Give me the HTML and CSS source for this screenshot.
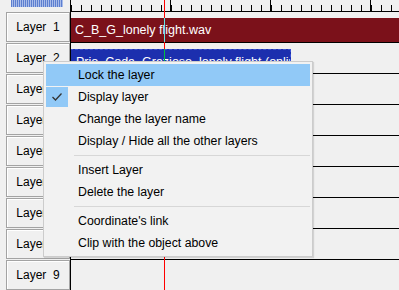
FILE: index.html
```html
<!DOCTYPE html>
<html>
<head>
  <title>Timeline</title>
  <link rel="stylesheet" href="styles.css">
</head>
<body>
  <div id="timeline">
    <div class="ruler-row">
      <div class="corner"><div class="zoom-bar"></div></div>
      <div class="ruler"></div>
    </div>

    <div class="layer-row">
      <div class="layer-head"><button class="layer-btn">Layer  1</button></div>
      <div class="track">
        <div class="clip clip-audio">C_B_G_lonely flight.wav</div>
      </div>
    </div>
    <div class="layer-row">
      <div class="layer-head"><button class="layer-btn">Layer  2</button></div>
      <div class="track">
        <div class="clip clip-selected">Prio_Coda_Grazioso_lonely flight (online).wav</div>
      </div>
    </div>
    <div class="layer-row">
      <div class="layer-head"><button class="layer-btn">Layer  3</button></div>
      <div class="track"></div>
    </div>
    <div class="layer-row">
      <div class="layer-head"><button class="layer-btn">Layer  4</button></div>
      <div class="track"></div>
    </div>
    <div class="layer-row">
      <div class="layer-head"><button class="layer-btn">Layer  5</button></div>
      <div class="track"></div>
    </div>
    <div class="layer-row">
      <div class="layer-head"><button class="layer-btn">Layer  6</button></div>
      <div class="track"></div>
    </div>
    <div class="layer-row">
      <div class="layer-head"><button class="layer-btn">Layer  7</button></div>
      <div class="track"></div>
    </div>
    <div class="layer-row">
      <div class="layer-head"><button class="layer-btn">Layer  8</button></div>
      <div class="track"></div>
    </div>
    <div class="layer-row">
      <div class="layer-head"><button class="layer-btn">Layer  9</button></div>
      <div class="track"></div>
    </div>
  </div>

  <div id="playhead"></div>

  <div id="context-menu">
    <div class="menu-item hover"><span class="menu-icon"></span><span>Lock the layer</span></div>
    <div class="menu-item"><span class="menu-icon checked">
      <svg width="12" height="10" viewBox="0 0 12 10"><polyline points="1.5,5 4.5,8 10.5,1.5" fill="none" stroke="#333" stroke-width="1.3"/></svg>
    </span><span>Display layer</span></div>
    <div class="menu-item"><span class="menu-icon"></span><span>Change the layer name</span></div>
    <div class="menu-item"><span class="menu-icon"></span><span>Display / Hide all the other layers</span></div>
    <div class="menu-sep"></div>
    <div class="menu-item"><span class="menu-icon"></span><span>Insert Layer</span></div>
    <div class="menu-item"><span class="menu-icon"></span><span>Delete the layer</span></div>
    <div class="menu-sep"></div>
    <div class="menu-item"><span class="menu-icon"></span><span>Coordinate's link</span></div>
    <div class="menu-item"><span class="menu-icon"></span><span>Clip with the object above</span></div>
  </div>
</body>
</html>
```

FILE: styles.css
```css
body {
  margin: 0;
  padding: 0;
  width: 399px;
  height: 290px;
  overflow: hidden;
  position: relative;
  background-color: #f0f0f0;
  font-family: "Liberation Sans", Arial, sans-serif;
  font-size: 12px;
  color: #000;
}

#timeline {
  display: flex;
  flex-direction: column;
}

.ruler-row {
  display: flex;
  height: 12px;
}

.corner {
  width: 70px;
  flex-shrink: 0;
}

.zoom-bar {
  margin-left: 11px;
  width: 52px;
  height: 7px;
  background: repeating-linear-gradient(to right, #5d7fd0 0 1px, #a9bce9 1px 2px);
}

.ruler {
  flex-grow: 1;
  border-left: 1px solid #000;
  border-bottom: 1px solid #000;
  background:
    repeating-linear-gradient(to right, transparent 0 99px, #000 99px 100px),
    repeating-linear-gradient(to right, #000 0 1px, transparent 1px 10px) left bottom / 100% 6px no-repeat;
}

.layer-row {
  display: flex;
  height: 31px;
}

.layer-head {
  width: 70px;
  flex-shrink: 0;
}

.layer-btn {
  display: block;
  margin: 0 0 0 6px;
  width: 64px;
  height: 30px;
  padding: 0;
  border: 1px solid #a3a3a3;
  box-shadow: inset 1px 1px 0 #fff;
  background-color: #f0f0f0;
  font-family: inherit;
  font-size: 12px;
  color: #000;
  white-space: pre;
  text-align: center;
}

.track {
  flex-grow: 1;
  border-left: 1px solid #000;
  border-bottom: 1px solid #000;
  overflow: hidden;
}

.clip {
  margin: 6px 0 0 -1px;
  height: 24px;
  line-height: 24px;
  color: #fff;
  font-size: 12.5px;
  white-space: nowrap;
  overflow: hidden;
  box-sizing: border-box;
}

.clip-audio {
  background-color: #7b111a;
  padding-left: 5px;
}

.clip-selected {
  width: 221px;
  background-color: #1c2fae;
  border: 1px dashed #3a52d6;
  padding-left: 5px;
}

#playhead {
  position: absolute;
  left: 164px;
  top: 0;
  width: 1px;
  height: 290px;
  background: linear-gradient(to bottom,
    #ff0000 0 18px, #66e6e6 18px 42px,
    #ff0000 42px 49px, #00c040 49px 73px,
    #ff0000 73px);
}

#context-menu {
  position: absolute;
  left: 43px;
  top: 61px;
  width: 270px;
  box-sizing: border-box;
  padding: 2px;
  background-color: #f2f2f2;
  border: 1px solid #cccccc;
  box-shadow: 1px 1px 1px rgba(0,0,0,0.12);
  font-size: 12.3px;
}

.menu-item {
  display: flex;
  align-items: center;
  height: 22px;
}

.menu-item.hover {
  background-color: #91c9f7;
}

.menu-icon {
  width: 22px;
  height: 20px;
  margin-right: 10px;
  display: flex;
  align-items: center;
  justify-content: center;
}

.menu-icon.checked {
  background-color: #91c9f7;
}

.menu-sep {
  height: 1px;
  margin: 3px 0 3px 28px;
  background-color: #d7d7d7;
}
```
